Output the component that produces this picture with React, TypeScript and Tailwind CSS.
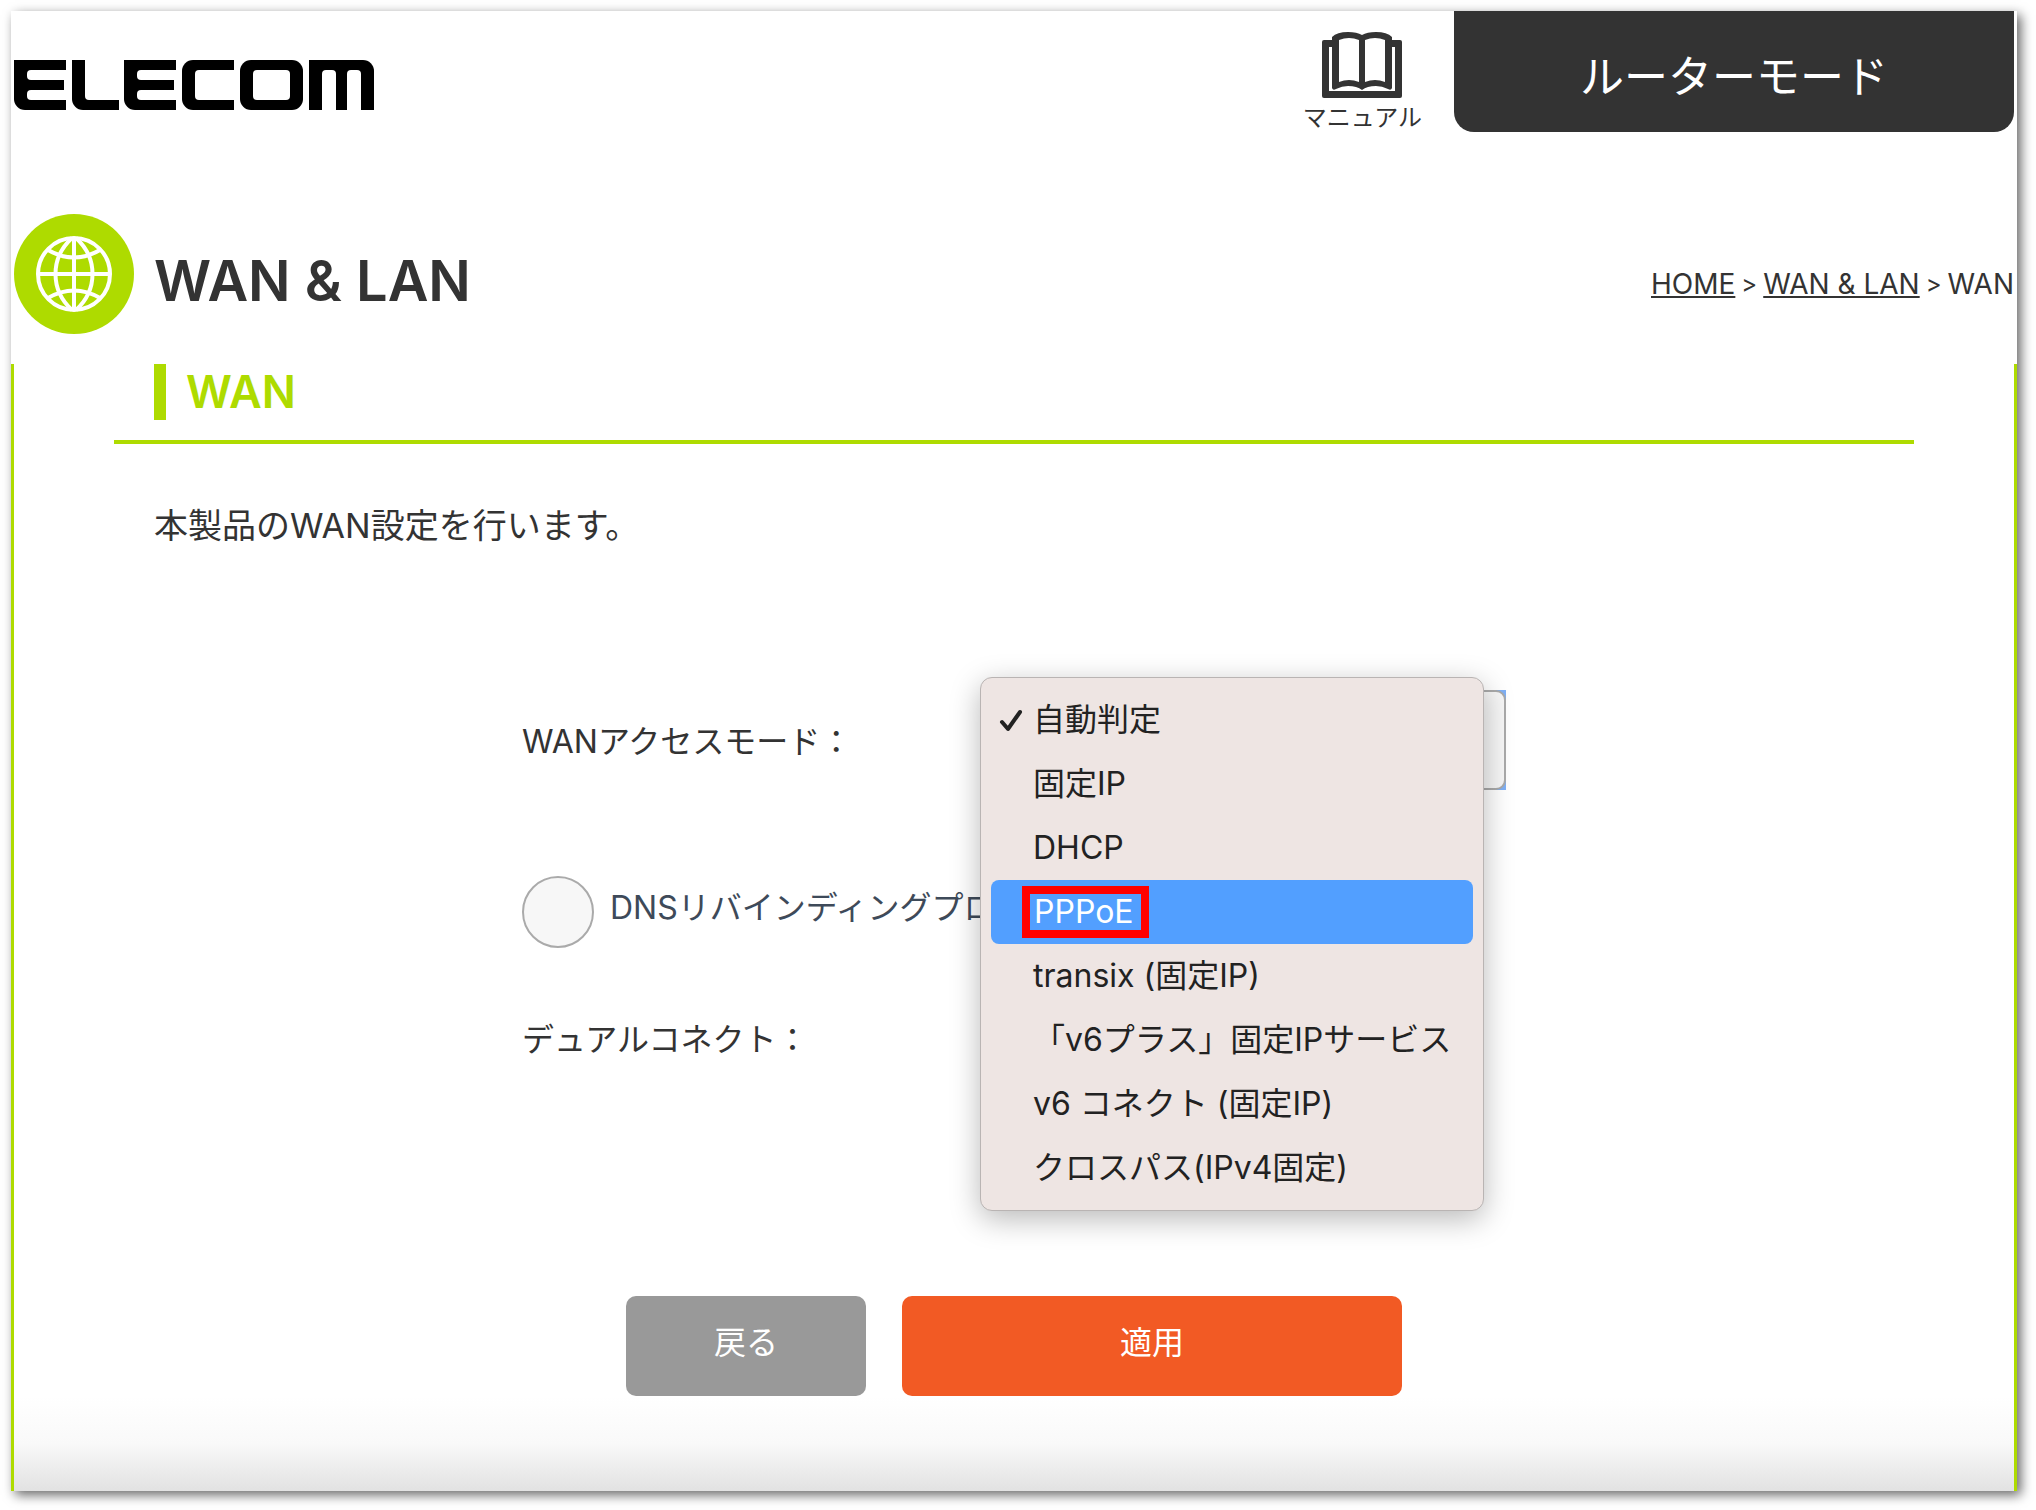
import React from "react";

const modes = [
  "自動判定",
  "固定IP",
  "DHCP",
  "PPPoE",
  "transix (固定IP)",
  "「v6プラス」固定IPサービス",
  "v6 コネクト (固定IP)",
  "クロスパス(IPv4固定)",
];

const Logo = () => (
  <svg width="360" height="50" viewBox="0 0 360 50" role="img" aria-label="ELECOM">
    <g fill="#000">
      <rect x="0" y="0" width="52" height="50" rx="11" />
      <rect x="0" y="0" width="52" height="36" />
      <rect x="20" y="36" width="32" height="14" />
      <rect x="58" y="0" width="47" height="50" rx="11" />
      <rect x="58" y="0" width="13" height="36" />
      <rect x="80" y="40" width="25" height="10" />
      <rect x="110" y="0" width="52" height="50" rx="11" />
      <rect x="110" y="0" width="52" height="36" />
      <rect x="130" y="36" width="32" height="14" />
      <rect x="168" y="0" width="52" height="50" rx="11" />
      <rect x="190" y="0" width="30" height="50" />
      <rect x="226" y="0" width="63" height="50" rx="11" />
      <rect x="295" y="0" width="65" height="50" rx="11" />
      <rect x="295" y="0" width="40" height="50" />
      <rect x="335" y="20" width="25" height="30" />
    </g>
    <g fill="#fff">
      <rect x="13" y="10" width="44" height="10" rx="4" />
      <rect x="13" y="30" width="44" height="10" rx="4" />
      <rect x="50" y="10" width="7" height="30" />
      <rect x="71" y="-10" width="39" height="50" rx="4" />
      <rect x="123" y="10" width="44" height="10" rx="4" />
      <rect x="123" y="30" width="44" height="10" rx="4" />
      <rect x="160" y="10" width="7" height="30" />
      <rect x="181" y="10" width="44" height="30" rx="4" />
      <rect x="239" y="10" width="37" height="30" rx="4" />
      <rect x="308" y="10" width="14" height="50" rx="4" />
      <rect x="333" y="10" width="14" height="50" rx="4" />
    </g>
  </svg>
);

const ManualIcon = () => (
  <svg width="80" height="66" viewBox="0 0 80 66" aria-hidden="true">
    <rect y="8" width="80" height="58" rx="2" fill="#333" />
    <rect x="7" y="15" width="66" height="44" fill="#fff" />
    <path
      d="M10 5Q15 0 26 0Q35 0 40 3Q45 0 54 0Q65 0 70 5V56Q69 59 66 57Q60 54 54 54Q45 54 40 58Q35 54 26 54Q20 54 14 57Q11 59 10 56Z"
      fill="#333"
    />
    <path d="M17 8Q27 4 37 8V50Q27 46 17 50ZM43 8Q53 4 63 8V50Q53 46 43 50Z" fill="#fff" />
  </svg>
);

const GlobeIcon = () => (
  <svg width="120" height="120" viewBox="0 0 120 120" aria-hidden="true">
    <circle cx="60" cy="60" r="60" fill="#aedb00" />
    <g fill="none" stroke="#fff" strokeWidth="4">
      <circle cx="60" cy="60" r="36" />
      <path d="M60 24V96M24 60H96" />
      <path d="M58 24C36 44 36 76 58 96M62 24C84 44 84 76 62 96" />
      <path d="M34 36Q60 51 86 36M34 84Q60 69 86 84" />
    </g>
  </svg>
);

const ModeMenu = () => (
  <ul
    role="listbox"
    aria-label="WANアクセスモード"
    className="absolute -top-[13px] right-[22px] z-10 w-[504px] rounded-xl border border-[#b9b4b3] bg-[#eee5e3] p-2.5 text-[#222] shadow-[0_8px_30px_rgba(0,0,0,0.28)]"
  >
    {modes.map((mode) => (
      <li
        key={mode}
        role="option"
        aria-selected={mode === "自動判定"}
        className={
          mode === "PPPoE"
            ? "flex h-16 items-center rounded-lg bg-[#529fff] pl-[31px] text-white"
            : "flex h-16 items-center pl-2"
        }
      >
        {mode === "PPPoE" ? (
          <span className="w-[127px] border-8 border-[#ff0000] pl-1 leading-9">{mode}</span>
        ) : (
          <>
            <span className="w-[34px] shrink-0">
              {mode === "自動判定" && (
                <svg width="24" height="24" viewBox="0 0 24 24" aria-hidden="true">
                  <path
                    d="M3 14L9 21L21 4"
                    fill="none"
                    stroke="#222"
                    strokeWidth="4"
                    strokeLinecap="round"
                    strokeLinejoin="round"
                  />
                </svg>
              )}
            </span>
            <span className="whitespace-nowrap">{mode}</span>
          </>
        )}
      </li>
    ))}
  </ul>
);

const App = () => {
  return (
    <div className="bg-white pt-[11px] pr-[19px] pb-[19px] pl-[11px] font-['Inter','Noto_Sans_CJK_JP',sans-serif] text-[#333]">
      <main className="bg-white shadow-[4px_4px_11px_rgba(0,0,0,0.6)]">
        <header className="flex items-start justify-between px-[3px]">
          <a href="#home" className="mt-[49px]">
            <Logo />
          </a>
          <div className="flex items-start gap-8">
            <a href="#manual" className="mt-[21px] flex flex-col items-center gap-1.5 text-2xl leading-7">
              <ManualIcon />
              マニュアル
            </a>
            <div className="flex h-[121px] w-[560px] items-center justify-center rounded-b-[20px] bg-[#333] pt-2.5 text-[44px] text-white">
              ルーターモード
            </div>
          </div>
        </header>

        <div className="mt-[82px] flex items-center px-[3px]">
          <GlobeIcon />
          <h1 className="ml-5 pt-3.5 text-[56px] leading-[64px] font-semibold">WAN &amp; LAN</h1>
          <nav
            aria-label="breadcrumb"
            className="ml-auto flex items-center gap-1.5 pt-5 text-[28px] leading-9"
          >
            <a href="#home" className="underline">HOME</a>
            <span className="text-2xl">&gt;</span>
            <a href="#wan-lan" className="underline">WAN &amp; LAN</a>
            <span className="text-2xl">&gt;</span>
            <span>WAN</span>
          </nav>
        </div>

        <section className="mt-[30px] border-x-[3px] border-[#aedb00]">
          <div className="mx-[100px]">
            <div className="border-b-4 border-[#aedb00] pb-5 pl-10">
              <h2 className="border-l-[12px] border-[#aedb00] pl-5 text-[45px] leading-[56px] font-semibold text-[#aedb00]">
                WAN
              </h2>
            </div>
            <p className="mt-[58px] ml-10 text-[34px] leading-[48px]">本製品のWAN設定を行います。</p>
          </div>

          <form className="mt-[140px]">
            <div className="mx-auto max-w-[984px] text-[32px] leading-[48px]">
              <div className="flex items-center justify-between">
                <label htmlFor="wan-mode" className="pt-1">WANアクセスモード：</label>
                <div className="relative w-1/2 bg-[#7fb0f5]">
                  <select
                    id="wan-mode"
                    defaultValue="自動判定"
                    className="block h-[100px] w-full appearance-none rounded-[10px] border-2 border-[#aaa] bg-[#f7f7f7] px-5"
                  >
                    {modes.map((mode) => (
                      <option key={mode}>{mode}</option>
                    ))}
                  </select>
                  <ModeMenu />
                </div>
              </div>
              <div className="mt-[86px] flex items-start gap-4">
                <input
                  id="dns-protect"
                  type="checkbox"
                  className="size-[72px] appearance-none rounded-full border-2 border-[#aaa] bg-[#f7f7f7]"
                />
                <label htmlFor="dns-protect" className="mt-2 text-[#3e4a59]">
                  DNSリバインディングプロ
                </label>
              </div>
              <p className="mt-[68px]">デュアルコネクト：</p>
            </div>

            <div className="mt-[232px] flex justify-center gap-9 text-[32px] text-white">
              <button type="button" className="h-[100px] w-[240px] rounded-[10px] bg-[#999] pb-1.5">
                戻る
              </button>
              <button type="submit" className="h-[100px] w-[500px] rounded-[10px] bg-[#f25a24] pb-1.5">
                適用
              </button>
            </div>
          </form>
          <div className="h-[95px] bg-linear-to-b from-white via-[#f9f9f9] to-[#e2e2e2]" />
        </section>
      </main>
    </div>
  );
};

export default App;
